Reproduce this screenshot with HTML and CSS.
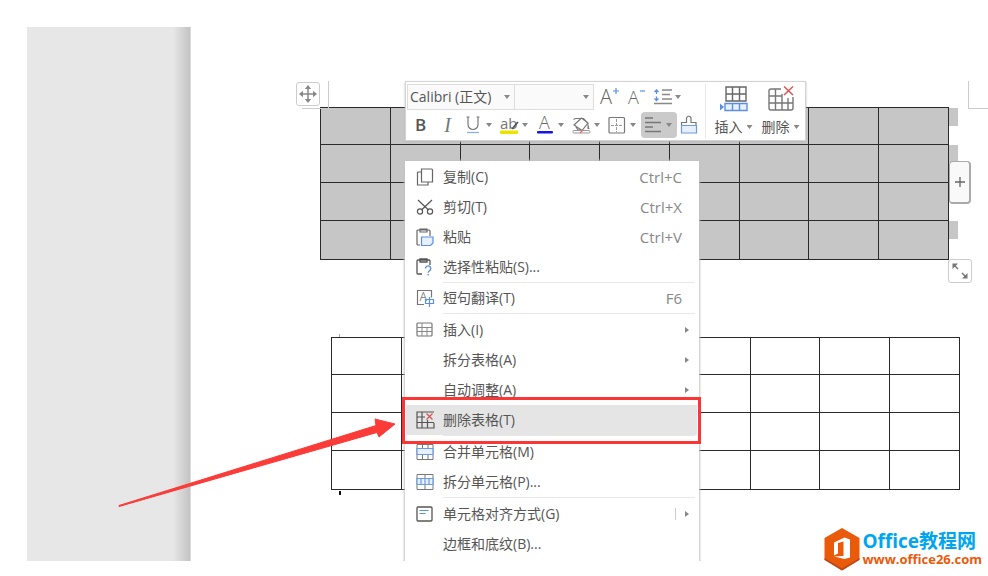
FILE: index.html
```html
<!DOCTYPE html>
<html lang="zh-CN">
<head>
<meta charset="utf-8">
<title>删除表格</title>
<link rel="stylesheet" href="styles.css">
</head>
<body>
<div class="stage">
  <aside class="gutter"></aside>
  <main class="page">
    <div class="sheet sheet-selected">
      <table class="grid selected" aria-label="选中的表格">
        <tr><td></td><td></td><td></td><td></td><td></td><td></td><td></td><td></td><td></td></tr>
        <tr><td></td><td></td><td></td><td></td><td></td><td></td><td></td><td></td><td></td></tr>
        <tr><td></td><td></td><td></td><td></td><td></td><td></td><td></td><td></td><td></td></tr>
        <tr><td></td><td></td><td></td><td></td><td></td><td></td><td></td><td></td><td></td></tr>
      </table>
      <span class="corner corner-left"></span>
      <span class="corner corner-right"></span>
      <button class="handle handle-move" aria-label="移动表格">
        <svg width="20" height="20" viewBox="0 0 20 20"><path d="M10 3v14M3 10h14" stroke="#888" stroke-width="1.500"/><path d="M10 1l3.200 4H6.800zM10 19l3.200-4H6.800zM1 10l4-3.200v6.400zM19 10l-4-3.200v6.400z" fill="#888"/></svg>
      </button>
      <button class="handle handle-add" aria-label="添加列">
        <svg width="12" height="12" viewBox="0 0 12 12"><path d="M6 1v10M1 6h10" stroke="#666" stroke-width="1.300"/></svg>
      </button>
      <button class="handle handle-resize" aria-label="调整大小">
        <svg width="20" height="20" viewBox="0 0 20 20"><path d="M4 4l4 4M12 12l4 4" stroke="#777" stroke-width="1.500"/><path d="M2.500 2.500h5.500l-5.500 5.500zM17.500 17.500H12l5.500-5.500z" fill="#777"/></svg>
      </button>
    </div>
    <div class="sheet sheet-plain">
      <table class="grid" aria-label="表格">
        <tr><td></td><td></td><td></td><td></td><td></td><td></td><td></td><td></td><td></td></tr>
        <tr><td></td><td></td><td></td><td></td><td></td><td></td><td></td><td></td><td></td></tr>
        <tr><td></td><td></td><td></td><td></td><td></td><td></td><td></td><td></td><td></td></tr>
        <tr><td></td><td></td><td></td><td></td><td></td><td></td><td></td><td></td><td></td></tr>
      </table>
      <span class="tick"></span>
      <span class="caret-mark"></span>
    </div>
  </main>

  <div class="toolbar" role="toolbar">
    <div class="tools">
      <div class="tool-row">
        <label class="field field-font"><select aria-label="字体"><option>Calibri (正文)</option></select><i class="drop"></i></label>
        <label class="field field-size"><select aria-label="字号"><option></option></select><i class="drop"></i></label>
        <button class="tool" aria-label="增大字号"><svg width="20" height="20" viewBox="0 0 20 20"><text x="0" y="17" class="glyph-big">A</text><path d="M16 1v6M13 4h6" stroke="#5c8fdc" stroke-width="1.200"/></svg></button>
        <button class="tool" aria-label="减小字号"><svg width="20" height="20" viewBox="0 0 20 20"><text x="1" y="17" class="glyph-mid">A</text><path d="M13 4h5" stroke="#5c8fdc" stroke-width="1.200"/></svg></button>
        <button class="split" aria-label="行距"><svg width="20" height="18" viewBox="0 0 20 18"><path d="M9 2h10M9 6.500h8M9 11h10M1 15.500h18" stroke="#888" stroke-width="1.300"/><path d="M3.500 2v4M3.500 8.500v4M1.500 4l2-2 2 2M1.500 10.500l2 2 2-2" fill="none" stroke="#5c8fdc" stroke-width="1.300"/></svg><i class="drop"></i></button>
      </div>
      <div class="tool-row">
        <button class="tool bold" aria-label="加粗">B</button>
        <button class="tool italic" aria-label="倾斜">I</button>
        <button class="split" aria-label="下划线"><svg width="18" height="18" viewBox="0 0 18 18"><path d="M4 1v7.500a5 5 0 0 0 10 0V1M2.500 1h3M12.500 1h3" fill="none" stroke="#777" stroke-width="1.200"/><path d="M3 16.500h12" stroke="#8db2ea" stroke-width="1.300"/></svg><i class="drop"></i></button>
        <button class="split" aria-label="突出显示"><svg width="18" height="18" viewBox="0 0 18 18"><text x="0" y="13" class="glyph-ab">ab</text><path d="M12 13l6-7" stroke="#555" stroke-width="1.800"/><rect y="14.500" width="18" height="3.500" rx="1" fill="#e9e500"/></svg><i class="drop"></i></button>
        <button class="split" aria-label="字体颜色"><svg width="18" height="18" viewBox="0 0 18 18"><text x="3" y="13" class="glyph-mid">A</text><rect x="1" y="15" width="16" height="2.500" rx="1" fill="#1414ee"/></svg><i class="drop"></i></button>
        <button class="split" aria-label="底纹"><svg width="20" height="18" viewBox="0 0 20 18"><path d="M2 9l7.500-7 6.500 5-6 7.500zM1.500 3.500l2-1h8l4.500 5M3 9.500L6 14h4" fill="none" stroke="#777" stroke-width="1.200"/><path d="M15.500 5l2 8h-2z" fill="#777"/><rect x="1" y="14.500" width="17" height="2.500" rx="1" fill="#fff" stroke="#999"/><path d="M8 17l3-3" stroke="#e66" stroke-width="1.200"/></svg><i class="drop"></i></button>
        <button class="split" aria-label="边框"><svg width="18" height="18" viewBox="0 0 18 18"><rect x="1" y="1.500" width="15.500" height="15.500" rx="1" fill="none" stroke="#777" stroke-width="1.200"/><path d="M8.500 3v13M3 9.500h12" stroke="#999" stroke-dasharray="3 1"/></svg><i class="drop"></i></button>
        <button class="split pressed" aria-label="对齐"><svg width="18" height="18" viewBox="0 0 18 18"><path d="M1 2h8M1 6.500h16M1 11h8M1 15.500h16" stroke="#777" stroke-width="1.300"/></svg><i class="drop"></i></button>
        <button class="tool brush" aria-label="格式刷"><svg width="18" height="18" viewBox="0 0 18 18"><path d="M1.500 9V6.500h5V2.500a2 2 0 0 1 4.500 0v4h5V9" fill="none" stroke="#777" stroke-width="1.200"/><path d="M1.500 9.500h15V17h-15z" fill="#e8f0fd" stroke="#6c9be0" stroke-width="1.200"/></svg></button>
      </div>
    </div>
    <div class="actions">
      <button class="action">
        <svg width="30" height="28" viewBox="0 0 30 28"><path d="M7 3h20v14H7zM7 10h20M13.500 3v14M20.500 3v14" fill="none" stroke="#666" stroke-width="1.400"/><path d="M6 19.500h22v7H6zM13.500 19.500v7M20.500 19.500v7" fill="#e8f0fd" stroke="#5c8fdc" stroke-width="1.400"/><path d="M1 19.500l4 3.500-4 3.500z" fill="#5c8fdc"/></svg>
        <span class="action-label">插入<i class="drop"></i></span>
      </button>
      <button class="action">
        <svg width="30" height="28" viewBox="0 0 30 28"><path d="M15 5H5a2 2 0 0 0-2 2v17a2 2 0 0 0 2 2h20a2 2 0 0 0 2-2V13M3 12h13M3 19h24M9.500 5v21M16 10v16M22 14v12" fill="none" stroke="#777" stroke-width="1.400"/><path d="M18 2.500l9 8.500M27 2.500L18 11" stroke="#d95454" stroke-width="1.500"/></svg>
        <span class="action-label">删除<i class="drop"></i></span>
      </button>
    </div>
  </div>

  <div class="menu-clip">
  <div class="menu" role="menu">
    <button class="item" role="menuitem"><svg width="18" height="18" viewBox="0 0 18 18"><path d="M5.500 1h10a1 1 0 0 1 1 1v12h-11zM5 4H2.500a1 1 0 0 0-1 1v12h10.500v-2.500" fill="none" stroke="#666" stroke-width="1.200"/></svg><span>复制(C)</span><kbd>Ctrl+C</kbd></button>
    <button class="item" role="menuitem"><svg width="18" height="18" viewBox="0 0 18 18"><path d="M2 2l10.500 10M16 2L5.500 12" stroke="#555" stroke-width="1.200"/><circle cx="4" cy="13.500" r="2.600" fill="none" stroke="#555" stroke-width="1.200"/><circle cx="14" cy="13.500" r="2.600" fill="none" stroke="#555" stroke-width="1.200"/></svg><span>剪切(T)</span><kbd>Ctrl+X</kbd></button>
    <button class="item" role="menuitem"><svg width="18" height="18" viewBox="0 0 18 18"><path d="M4 17H2a1 1 0 0 1-1-1V3a1 1 0 0 1 1-1h11a1 1 0 0 1 1 1v5M4 1h7v3H4z" fill="none" stroke="#666" stroke-width="1.200"/><path d="M5.500 9H17v6l-2.500 2.500h-9z" fill="#e8f0fd" stroke="#5c8fdc" stroke-width="1.200"/></svg><span>粘贴</span><kbd>Ctrl+V</kbd></button>
    <button class="item" role="menuitem"><svg width="18" height="18" viewBox="0 0 18 18"><path d="M6 16H2a1 1 0 0 1-1-1V3a1 1 0 0 1 1-1h11a1 1 0 0 1 1 1v4M4 1h7v3H4z" fill="none" stroke="#555" stroke-width="1.300"/><path d="M9.500 10.500a2.600 2.600 0 1 1 4 2.200c-1 .7-1.300 1-1.300 2M12.200 16v1.500" fill="none" stroke="#5c8fdc" stroke-width="1.400"/></svg><span>选择性粘贴(S)...</span></button>
    <hr>
    <button class="item" role="menuitem"><svg width="18" height="18" viewBox="0 0 18 18"><path d="M8 15.500H1.500v-14h14v7" fill="none" stroke="#777" stroke-width="1.200"/><text x="3.500" y="12" class="glyph-small">A</text><path d="M9.500 10.500h8v4h-8zM13.500 8v10" fill="none" stroke="#5c8fdc" stroke-width="1.200"/></svg><span>短句翻译(T)</span><kbd>F6</kbd></button>
    <hr>
    <button class="item" role="menuitem"><svg width="18" height="18" viewBox="0 0 18 18"><rect x="1" y="2" width="15" height="13" rx="1" fill="none" stroke="#777" stroke-width="1.200"/><path d="M1 6.500h15M1 10.500h15M6 2v13M11 6v9" stroke="#888"/></svg><span>插入(I)</span><i class="sub"></i></button>
    <button class="item" role="menuitem"><b></b><span>拆分表格(A)</span><i class="sub"></i></button>
    <button class="item" role="menuitem"><b></b><span>自动调整(A)</span><i class="sub"></i></button>
    <button class="item active" role="menuitem"><svg width="18" height="18" viewBox="0 0 18 18"><path d="M18 1H1v16h17v-5M1 6h8M1 11.500h17M6 1v16M11.500 9v8" fill="none" stroke="#555" stroke-width="1.200"/><path d="M10.500 2.500l6 6M16.500 2.500l-6 6" stroke="#d95454" stroke-width="1.300"/></svg><span>删除表格(T)</span></button>
    <hr>
    <button class="item" role="menuitem"><svg width="18" height="18" viewBox="0 0 18 18"><path d="M1 1.500h16v15H1zM6.500 1v4.500M12 1v4.500M6.500 12v5M12 12v5" fill="none" stroke="#777"/><path d="M1 5.500h16v6H1z" fill="#e8f0fd" stroke="#6c9be0" stroke-width="1.200"/></svg><span>合并单元格(M)</span></button>
    <button class="item" role="menuitem"><svg width="18" height="18" viewBox="0 0 18 18"><path d="M1 1.500h16v15H1zM9 1v4.500M9 12v5" fill="none" stroke="#777"/><path d="M1 5.500h16v6H1zM5 5.500v6M9 5.500v6M13 5.500v6" fill="#e8f0fd" stroke="#6c9be0" stroke-width="1.200"/></svg><span>拆分单元格(P)...</span></button>
    <hr>
    <button class="item" role="menuitem"><svg width="18" height="18" viewBox="0 0 18 18"><rect x="1" y="2" width="15" height="14" rx="1" fill="none" stroke="#555" stroke-width="1.300"/><path d="M3.500 5.500h9M3.500 8.500h6" stroke="#5c8fdc" stroke-width="1.200"/></svg><span>单元格对齐方式(G)</span><em></em><i class="sub"></i></button>
    <button class="item" role="menuitem"><b></b><span>边框和底纹(B)...</span></button>
  </div>
  </div>

  <div class="highlight"></div>
  <svg class="arrow" width="280" height="92" viewBox="0 0 280 92"><path d="M1 89.500L258 9.500 257 3l20 5-16 13-2-4.500L1 90.500z" fill="#fb3b38" stroke="#fb3b38"/></svg>

  <a class="brand" href="#">
    <svg width="36" height="44" viewBox="0 0 36 44"><path d="M18 1l17.500 10v21.500L18 43.500.5 32.500V11z" fill="#ea5a0b"/><path d="M.5 31L18 41.500 35.500 31v2L18 43.500.5 33z" fill="#b9481c"/><path d="M10 15.500l10.500-5 5.500 2v18l-5.500 1.500-10.500-2.500 9.500-.5V14.500L14 16v10.500l-4 2z" fill="#fff"/></svg>
    <span class="brand-text"><strong>Office教程网</strong><small>www.office26.com</small></span>
  </a>
</div>
</body>
</html>
```
FILE: styles.css
```css
* { box-sizing: border-box; }

body {
  margin: 0;
  background: #fff;
  color: #555;
  font-family: "Open Sans", "Noto Sans CJK SC", sans-serif;
  font-size: 14px;
  line-height: 20px;
}

button, select {
  font: inherit;
  color: inherit;
  border: 0;
  padding: 0;
  margin: 0;
  background: none;
}

svg { display: block; flex: none; overflow: visible; }

.stage {
  position: relative;
  display: flex;
  min-height: 576px;
  padding: 27px 0 15px 27px;
}

.gutter {
  flex: none;
  width: 164px;
  border-right: 1px solid #dcdcdc;
  background: linear-gradient(to right, #e7e7e7 calc(100% - 17px), #c3c3c3);
}

.page {
  flex: 1;
  display: flex;
  flex-direction: column;
  gap: 77px;
  padding-top: 80px;
}

.sheet { position: relative; }
.sheet-selected { margin: 0 39px 0 129px; }
.sheet-plain { margin: 0 28px 0 140px; }

/* Document tables */
.grid {
  width: 100%;
  table-layout: fixed;
  border-collapse: collapse;
}
.grid td {
  position: relative;
  height: 38px;
  padding: 0;
  border: 1px solid #2a2a2a;
}
.grid tr:first-child td { height: 37px; }
.grid tr:last-child td { height: 39px; }
.selected td { background: #c6c6c6; }
.selected td:last-child::after {
  content: "";
  position: absolute;
  left: 100%;
  top: 0;
  width: 9px;
  height: 18px;
  border-left: 1px solid #2a2a2a;
  background: #c6c6c6;
}

.corner {
  position: absolute;
  top: -26px;
  width: 27px;
  height: 28px;
  border: 0 solid #ccc;
  border-bottom-width: 1px;
}
.corner-left { left: -18px; border-right-width: 1px; }
.corner-right { right: -39px; width: 20px; border-left-width: 1px; }

.handle {
  position: absolute;
  display: flex;
  align-items: center;
  justify-content: center;
  width: 24px;
  height: 24px;
  border: 1px solid #ccc;
  border-radius: 3px;
  background: #fff;
}
.handle-move { left: -24px; top: -25px; }
.handle-add {
  right: -22px;
  top: 54px;
  width: 22px;
  height: 43px;
  border: 1px solid #aaa;
  border-width: 1px 2px 2px 1px;
  border-radius: 4px;
  background: #f9f9f9;
}
.handle-resize { right: -23px; top: 152px; }

.tick {
  position: absolute;
  left: 8px;
  top: -3px;
  width: 1px;
  height: 3px;
  background: #aaa;
}
.caret-mark {
  position: absolute;
  left: 8px;
  top: 154px;
  width: 2px;
  height: 4px;
  background: #111;
}

/* Floating toolbar */
.toolbar {
  position: absolute;
  left: 405px;
  top: 81px;
  display: flex;
  gap: 4px;
  padding: 2px 1px;
  border: 1px solid #d4d4d4;
  background: #fff;
  box-shadow: 0 1px 2px #bbb;
}
.tools {
  display: flex;
  flex-direction: column;
  gap: 2px;
  width: 299px;
  border-right: 1px solid #e8e8e8;
}
.tool-row { display: flex; align-items: center; height: 26px; }

.field {
  position: relative;
  display: flex;
  align-items: center;
  height: 26px;
  border: 1px solid #ddd;
  background: #fafafa;
}
.field-font { width: 108px; }
.field-size { width: 79px; border-left: 0; margin-right: 2px; }
.field select {
  width: 100%;
  height: 100%;
  padding-left: 2px;
  appearance: none;
  outline: 0;
}
.field .drop { position: absolute; right: 4px; }

.drop {
  flex: none;
  width: 6px;
  height: 4px;
  background: #888;
  clip-path: polygon(0 0, 100% 0, 50% 100%);
}

.tool, .split {
  display: flex;
  align-items: center;
  height: 26px;
}
.tool { justify-content: center; width: 27px; }
.split { justify-content: space-between; width: 36px; padding: 0 5px 0 3px; }
.brush { width: 24px; }
.pressed { border-radius: 4px; background: #cacaca; }
.bold { font-size: 17px; font-weight: 600; }
.italic {
  color: #777;
  font-family: "Liberation Serif", serif;
  font-size: 20px;
  font-style: italic;
}

.glyph-big { font-size: 20px; font-weight: 300; fill: #666; }
.glyph-mid { font-size: 18px; font-weight: 300; fill: #666; }
.glyph-ab { font-size: 15px; fill: #777; }
.glyph-small { font-size: 12px; fill: #888; }

.actions { display: flex; }
.action {
  display: flex;
  flex-direction: column;
  align-items: center;
  justify-content: space-between;
  width: 47px;
}
.action-label { display: flex; align-items: center; gap: 4px; line-height: 22px; }

/* Context menu, cut off at the bottom of the window area */
.menu-clip {
  position: absolute;
  left: 401px;
  top: 157px;
  bottom: 15px;
  width: 302px;
  padding: 4px 4px 0;
  overflow: hidden;
}
.menu {
  display: flex;
  flex-direction: column;
  height: 420px;
  padding-top: 1px;
  background: #fff;
  box-shadow: 0 0 2px 1px #c4c4c4;
}
.menu hr {
  width: 252px;
  height: 2px;
  margin: 0 4px 0 auto;
  border: 0;
  border-top: 1px solid #e8e8e8;
}
.menu hr:first-of-type { height: 1px; }
.item {
  display: flex;
  align-items: center;
  gap: 9px;
  height: 30px;
  margin: 0 2px 0 1px;
  padding: 0 8px 0 10px;
  text-align: left;
}
.item b { width: 18px; }
.item span { flex: 1; white-space: nowrap; }
.item kbd { margin-right: 7px; font: inherit; font-size: 15px; color: #888; }
.active { background: #e5e5e5; }
.item em { width: 1px; height: 12px; background: #ccc; }
.sub {
  width: 4px;
  height: 6px;
  background: #888;
  clip-path: polygon(0 0, 100% 50%, 0 100%);
}

/* Annotation */
.highlight {
  position: absolute;
  left: 402px;
  top: 397px;
  width: 299px;
  height: 47px;
  border: 3px solid #fb3735;
}
.arrow { position: absolute; left: 118px; top: 416px; }

/* Site mark */
.brand {
  position: absolute;
  right: 6px;
  bottom: 5px;
  display: flex;
  align-items: center;
  gap: 2px;
  text-decoration: none;
}
.brand-text { display: flex; flex-direction: column; }
.brand strong { color: #00a5ef; font-size: 19px; line-height: 20px; }
.brand small { color: #ea5a0b; font-size: 13px; font-weight: 700; line-height: 16px; }
```
